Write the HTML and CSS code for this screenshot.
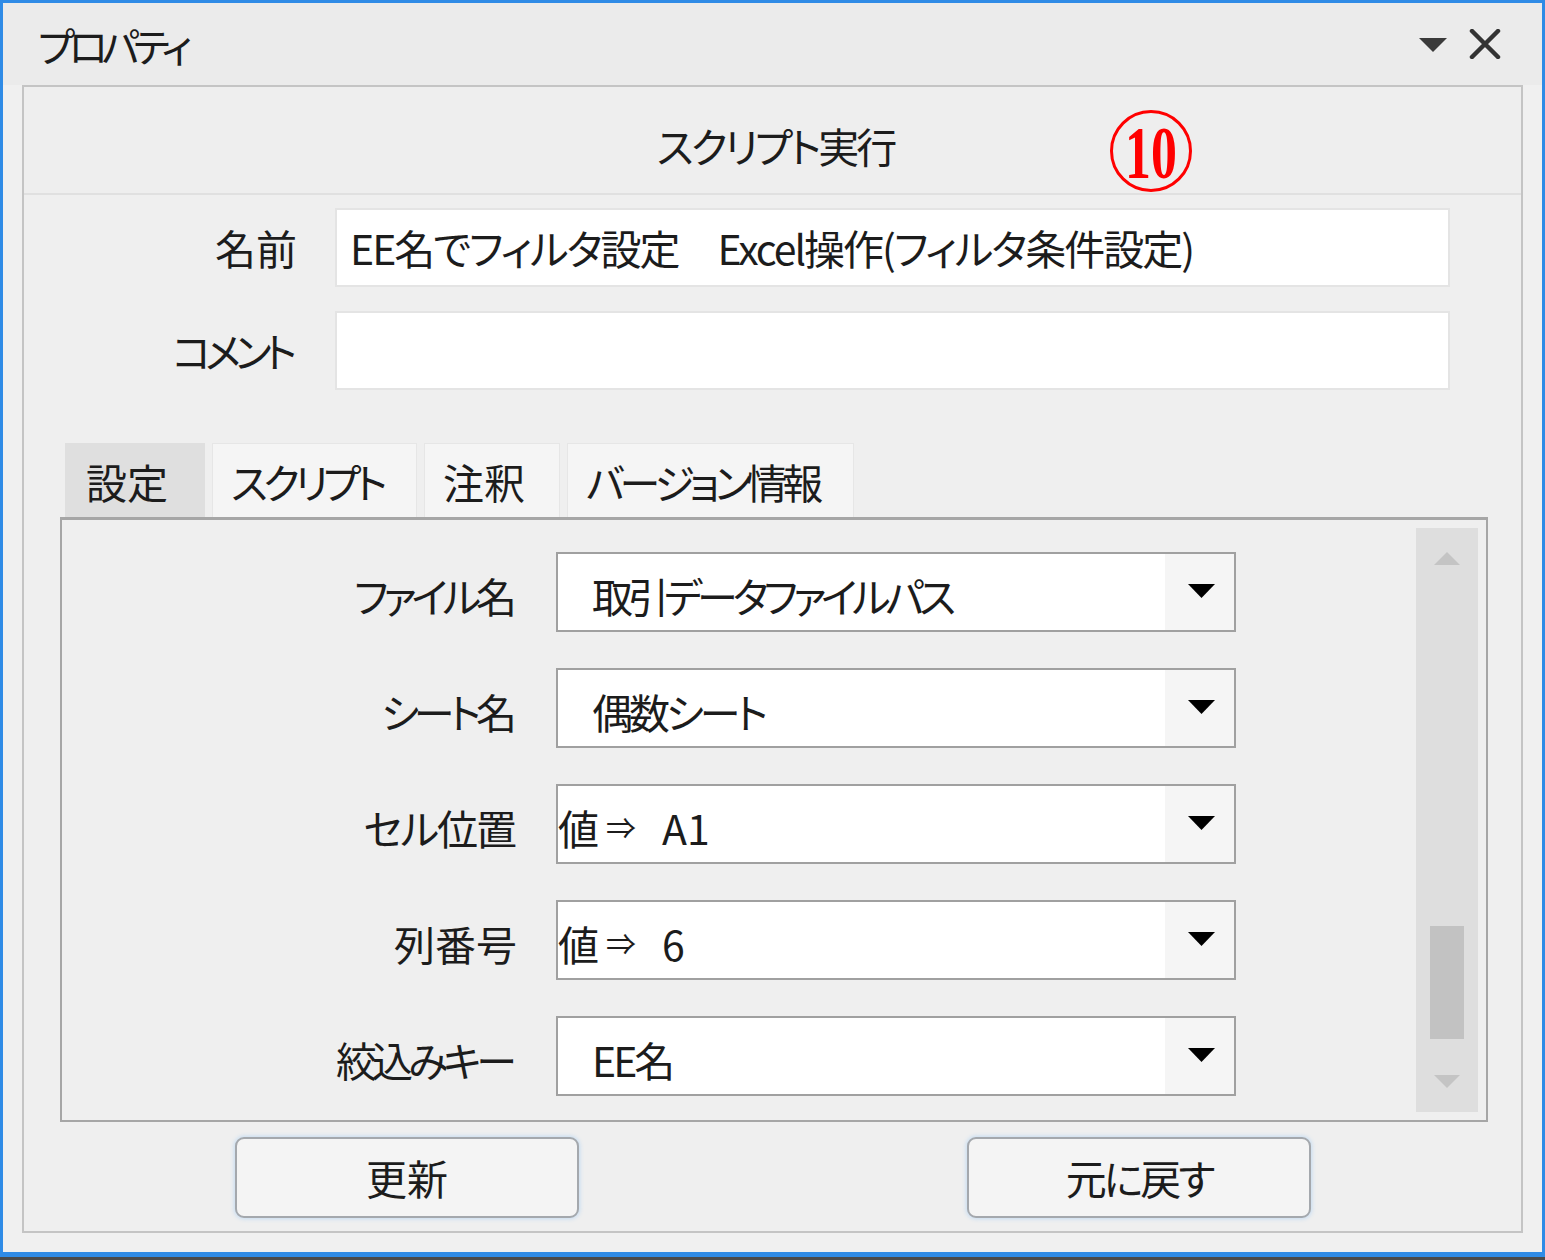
FILE: index.html
```html
<!DOCTYPE html>
<html lang="ja">
<head>
<meta charset="utf-8">
<title>プロパティ</title>
<link rel="stylesheet" href="styles.css">
</head>
<body>
<div class="window">
  <div class="titlebar">
    <div class="title">プロパティ</div>
    <div class="controls">
      <svg class="ctl-menu" width="28" height="14" viewBox="0 0 28 14"><polygon points="0,0 28,0 14,14" fill="#3a3a3a"/></svg>
      <svg class="ctl-close" width="32" height="30" viewBox="0 0 32 30"><path d="M3 2 L29 28 M29 2 L3 28" stroke="#333" stroke-width="4.5" stroke-linecap="round"/></svg>
    </div>
  </div>
  <div class="body">
    <div class="panel">
      <div class="header">
        <span class="header-title">スクリプト実行</span>
        <span class="annot"><span class="annot-num">10</span></span>
      </div>
      <div class="form">
        <div class="form-label">名前</div>
        <div class="textbox">EE名でフィルタ設定　Excel操作(フィルタ条件設定)</div>
        <div class="form-label kana6">コメント</div>
        <div class="textbox"></div>
      </div>
      <div class="tabs">
        <div class="tab tab-active tab-w1">設定</div>
        <div class="tab tab-w2 kana5">スクリプト</div>
        <div class="tab tab-w3">注釈</div>
        <div class="tab tab-w4 kana5">バージョン情報</div>
      </div>
      <div class="tabpage">
        <div class="rows">
          <div class="row">
            <div class="row-label kana5">ファイル名</div>
            <div class="combo"><span class="combo-text kana5">取引データファイルパス</span><span class="combo-btn"><svg width="27" height="14" viewBox="0 0 27 14"><polygon points="0,0 27,0 13.5,14" fill="#000"/></svg></span></div>
          </div>
          <div class="row">
            <div class="row-label kana5">シート名</div>
            <div class="combo"><span class="combo-text kana4">偶数シート</span><span class="combo-btn"><svg width="27" height="14" viewBox="0 0 27 14"><polygon points="0,0 27,0 13.5,14" fill="#000"/></svg></span></div>
          </div>
          <div class="row">
            <div class="row-label kana2">セル位置</div>
            <div class="combo"><span class="combo-text flush"><span class="val-key">値</span><span class="val-arrow">⇒</span><span class="val-num">A1</span></span><span class="combo-btn"><svg width="27" height="14" viewBox="0 0 27 14"><polygon points="0,0 27,0 13.5,14" fill="#000"/></svg></span></div>
          </div>
          <div class="row">
            <div class="row-label">列番号</div>
            <div class="combo"><span class="combo-text flush"><span class="val-key">値</span><span class="val-arrow">⇒</span><span class="val-num">6</span></span><span class="combo-btn"><svg width="27" height="14" viewBox="0 0 27 14"><polygon points="0,0 27,0 13.5,14" fill="#000"/></svg></span></div>
          </div>
          <div class="row">
            <div class="row-label kana5">絞込みキー</div>
            <div class="combo"><span class="combo-text kana3">EE名</span><span class="combo-btn"><svg width="27" height="14" viewBox="0 0 27 14"><polygon points="0,0 27,0 13.5,14" fill="#000"/></svg></span></div>
          </div>
        </div>
        <div class="scrollbar">
          <svg class="sb-arrow" width="26" height="13" viewBox="0 0 26 13"><polygon points="0,13 26,13 13,0" fill="#c4c4c4"/></svg>
          <div class="sb-track"><div class="sb-thumb"></div></div>
          <svg class="sb-arrow" width="26" height="13" viewBox="0 0 26 13"><polygon points="0,0 26,0 13,13" fill="#c4c4c4"/></svg>
        </div>
      </div>
      <div class="buttons">
        <div class="btn">更新</div>
        <div class="btn kana3">元に戻す</div>
      </div>
    </div>
  </div>
</div>
</body>
</html>
```

FILE: styles.css
```css
html, body {
  margin: 0;
  padding: 0;
}
body {
  width: 1545px;
  height: 1260px;
  background: #4a4a4a;
  font-family: "Noto Sans CJK JP", "Noto Sans", sans-serif;
  font-feature-settings: "palt" 1;
  color: #1c1c1c;
  overflow: hidden;
}
.window {
  box-sizing: border-box;
  width: 1545px;
  height: 1257px;
  border: 3px solid #2f8be6;
  border-bottom-width: 5px;
  background: #f0f0f0;
  display: flex;
  flex-direction: column;
}
.titlebar {
  height: 82px;
  flex: none;
  background: #ebebeb;
  display: flex;
  align-items: center;
  padding: 0 41px 0 35px;
}
.title {
  font-size: 40px;
  line-height: 1;
  flex: 1;
  margin-top: 2px;
  letter-spacing: -6px;
}
.controls {
  display: flex;
  align-items: center;
  gap: 22px;
}
.ctl-menu { margin-top: 2px; }

.kana2 { letter-spacing: -2px; }
.kana3 { letter-spacing: -3px; }
.kana4 { letter-spacing: -4px; }
.kana5 { letter-spacing: -5px; }
.kana6 { letter-spacing: -6px; }
.form-label.kana6 { padding-right: 6px; }
.row-label.kana5 { padding-right: 5px; }
.row-label.kana2 { padding-right: 2px; }

.body {
  flex: 1;
  padding: 0 19px 19px 19px;
  display: flex;
}
.panel {
  flex: 1;
  border: 2px solid #c4c4c4;
  background: #efefef;
  display: flex;
  flex-direction: column;
}
.header {
  position: relative;
  height: 106px;
  border-bottom: 2px solid #e0e0e0;
  background: #eeeeee;
  display: flex;
  align-items: center;
  justify-content: center;
}
.header-title {
  font-size: 41px;
  line-height: 1;
  margin-top: 10px;
  margin-left: 6px;
  letter-spacing: -3px;
}
.annot {
  position: absolute;
  left: 1086px;
  top: 23px;
  box-sizing: border-box;
  width: 82px;
  height: 82px;
  border: 3px solid #ff0000;
  border-radius: 50%;
  display: flex;
  align-items: center;
  justify-content: center;
}
.annot-num {
  font-family: "Liberation Serif", serif;
  font-weight: bold;
  font-size: 74px;
  line-height: 1;
  color: #ff0000;
  transform: scaleX(0.7);
  margin-top: 4px;
  letter-spacing: 0;
}

.form {
  display: grid;
  grid-template-columns: 273px 1115px;
  column-gap: 38px;
  row-gap: 24px;
  margin-top: 13px;
  align-items: center;
}
.form-label {
  text-align: right;
  font-size: 41px;
  line-height: 1;
}
.textbox {
  box-sizing: border-box;
  height: 79px;
  background: #ffffff;
  border: 2px solid #e4e4e4;
  padding-left: 13px;
  font-size: 41px;
  line-height: 75px;
  white-space: nowrap;
  letter-spacing: -2px;
}

.tabs {
  display: flex;
  gap: 7px;
  margin-top: 53px;
  margin-left: 41px;
  height: 74px;
}
.tab {
  box-sizing: border-box;
  height: 74px;
  background: #f5f5f5;
  border: 1px solid #e6e6e6;
  border-bottom: none;
  padding-left: 18px;
  font-size: 41px;
  line-height: 74px;
  white-space: nowrap;
}
.tab-active {
  background: #dfdfdf;
  border-color: #dfdfdf;
  padding-left: 20px;
}
.tab-w1 { width: 140px; }
.tab-w2 { width: 205px; }
.tab-w3 { width: 136px; }
.tab-w4 { width: 287px; }

.tabpage {
  box-sizing: border-box;
  height: 605px;
  margin-left: 36px;
  margin-right: 33px;
  border: 2px solid #a6a6a6;
  border-top-width: 3px;
  background: #efefef;
  display: flex;
}
.rows {
  flex: 1;
  display: flex;
  flex-direction: column;
  gap: 36px;
  padding-top: 32px;
}
.row {
  display: grid;
  grid-template-columns: 455px 680px;
  column-gap: 39px;
  align-items: center;
}
.row-label {
  text-align: right;
  font-size: 41px;
  line-height: 1;
  margin-top: 6px;
}
.combo {
  box-sizing: border-box;
  height: 80px;
  border: 2px solid #a0a0a0;
  background: #ffffff;
  display: flex;
}
.combo-text {
  flex: 1;
  padding-left: 34px;
  font-size: 41px;
  line-height: 82px;
  white-space: nowrap;
}
.combo-text.flush {
  padding-left: 0;
}
.val-arrow {
  font-size: 30px;
  margin-left: 7px;
  position: relative;
  top: -6px;
}
.val-num {
  margin-left: 26px;
}
.combo-btn {
  width: 69px;
  background: #f5f5f5;
  display: flex;
  align-items: center;
  justify-content: center;
}
.combo-btn svg {
  margin-left: 4px;
  margin-top: -2px;
}

.scrollbar {
  width: 62px;
  margin: 8px 8px 8px 0;
  background: #dedede;
  display: flex;
  flex-direction: column;
  align-items: center;
}
.sb-arrow {
  flex: none;
  margin: 24px 0;
}
.sb-track {
  flex: 1;
  align-self: stretch;
  display: flex;
  flex-direction: column;
  justify-content: flex-end;
  align-items: center;
  padding-bottom: 12px;
}
.sb-thumb {
  width: 34px;
  height: 113px;
  background: #c2c2c2;
}

.buttons {
  display: flex;
  gap: 388px;
  padding-left: 211px;
  margin-top: 15px;
}
.btn {
  box-sizing: border-box;
  width: 344px;
  height: 81px;
  border: 2px solid #a4a8ad;
  border-radius: 9px;
  background: #f4f4f4;
  box-shadow: 0 0 4px 1px #c5dcf2;
  font-size: 41px;
  line-height: 77px;
  text-align: center;
}
```
